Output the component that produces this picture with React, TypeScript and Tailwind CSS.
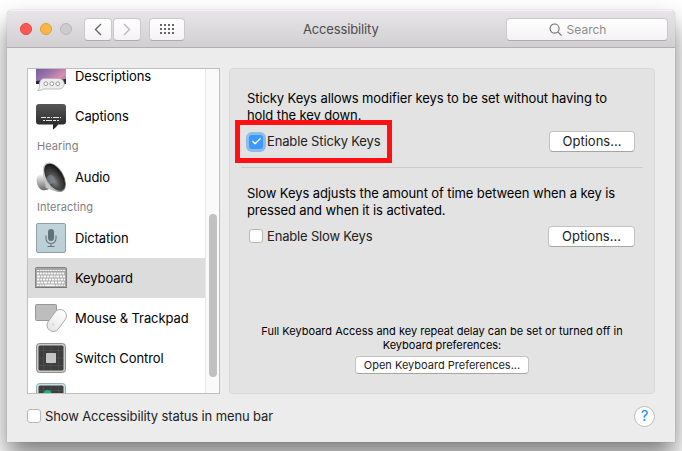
import type { ReactNode } from "react";
import { Check } from "lucide-react";

function DescriptionsIcon() {
  return (
    <svg width="32" height="32" viewBox="0 0 32 32">
      <defs>
        <linearGradient id="sunset" x1="0" y1="0" x2="1" y2="1">
          <stop offset="0" stopColor="#5f5494" />
          <stop offset=".45" stopColor="#9c70ad" />
          <stop offset=".75" stopColor="#d98fae" />
          <stop offset="1" stopColor="#8b6aa8" />
        </linearGradient>
      </defs>
      <rect x="1" y="2" width="30" height="22" fill="url(#sunset)" />
      <path d="M1 21l8-1 6 1 16-2v5H1z" fill="#2c2540" />
      <path d="M9 18.500h15a5.200 5.200 0 0 1 0 10.500H9c-1.500 1-3.500 1.500-6.500 1.500 1.500-1 2-2.500 2-6.500A5.200 5.200 0 0 1 9 18.500z" fill="#ededed" stroke="#b0b0b0" strokeWidth=".8" />
      <g fill="#fff" stroke="#8c8c8c" strokeWidth=".9"><circle cx="10.800" cy="23.700" r="1.900" /><circle cx="16.800" cy="23.700" r="1.900" /><circle cx="22.800" cy="23.700" r="1.900" /></g>
    </svg>
  );
}

function CaptionsIcon() {
  return (
    <svg width="32" height="32" viewBox="0 0 32 32">
      <defs><linearGradient id="cap" x1="0" y1="0" x2="0" y2="1"><stop offset="0" stopColor="#575757" /><stop offset="1" stopColor="#222" /></linearGradient></defs>
      <path d="M4 4h24a3 3 0 0 1 3 3v14.500a3 3 0 0 1-3 3h-5c-1 1.500-2.500 3.500-5 5v-5H4a3 3 0 0 1-3-3V7a3 3 0 0 1 3-3z" fill="url(#cap)" />
      <path d="M6 17.500h20" stroke="#e3e3e3" strokeWidth="1" strokeDasharray="5 1 3 1 1 1 6 1" />
      <path d="M8 20.500h16" stroke="#e3e3e3" strokeWidth="1" strokeDasharray="2 1 6 1 3 1" />
    </svg>
  );
}

function AudioIcon() {
  return (
    <svg width="32" height="32" viewBox="0 0 32 32">
      <defs>
        <linearGradient id="metal" x1="0" y1="0" x2="1" y2="1"><stop offset="0" stopColor="#dedede" /><stop offset=".6" stopColor="#a8a8a8" /><stop offset="1" stopColor="#444" /></linearGradient>
        <linearGradient id="magnet" x1="0" y1="0" x2="0" y2="1"><stop offset="0" stopColor="#fafafa" /><stop offset="1" stopColor="#6a6a6a" /></linearGradient>
        <radialGradient id="cone" cx=".35" cy=".6" r=".65"><stop offset="0" stopColor="#8a8a8a" /><stop offset=".4" stopColor="#505050" /><stop offset="1" stopColor="#151515" /></radialGradient>
      </defs>
      <path d="M2 16c1-2 3-3 6-3l7 14c-2 2-5 2.500-8 2-4-1-6.500-9-5-13z" fill="url(#magnet)" />
      <path d="M8 14c0-4 0-9 3-12l14 29c-5 0-10-3-14-4z" fill="#c4c4c4" />
      <ellipse cx="19.300" cy="16.300" rx="9.300" ry="16.300" transform="rotate(-31 19.300 16.300)" fill="url(#metal)" />
      <ellipse cx="19.600" cy="16.200" rx="8.200" ry="15" transform="rotate(-31 19.600 16.200)" fill="url(#cone)" />
      <ellipse cx="15.500" cy="18.500" rx="3.800" ry="4.600" fill="#808890" opacity=".65" />
    </svg>
  );
}

function DictationIcon() {
  return (
    <svg width="32" height="32" viewBox="0 0 32 32">
      <defs><linearGradient id="dict" x1="0" y1="0" x2="0" y2="1"><stop offset="0" stopColor="#c2d3da" /><stop offset="1" stopColor="#b9ced6" /></linearGradient></defs>
      <rect x="1.500" y="1.500" width="29" height="29" rx="1.500" fill="url(#dict)" stroke="#929fa5" />
      <rect x="13" y="7" width="6" height="12" rx="3" fill="#62727a" />
      <path d="M11 13.500v3a5 5 0 0 0 10 0v-3M16 21.500v3M12.500 24.500h7" fill="none" stroke="#66767e" strokeWidth="1.100" />
    </svg>
  );
}

function KeyboardIcon() {
  return (
    <svg width="32" height="32" viewBox="0 0 32 32">
      <rect x=".5" y="5.500" width="31" height="20" rx="1" fill="#a6a6a6" stroke="#858585" />
      <path d="M0 25.500h32" stroke="#777" />
      <g stroke="#fafafa" strokeWidth="2">
        <path d="M2 8.500h28" strokeDasharray="2 .6" strokeWidth="1.200" />
        <path d="M2 11.500h28" strokeDasharray="2.100 .7" />
        <path d="M2 14.500h28" strokeDasharray="3 .7 2 .7" />
        <path d="M2 17.500h28" strokeDasharray="2.500 .7 2 .7" />
        <path d="M2 20.500h28" strokeDasharray="3.500 .7 2 .7" />
        <path d="M2 23.200h28" strokeDasharray="2 .7 2 .7 2 .7 10 .7 2 .7 2 .7 2 .7" strokeWidth="1.600" />
      </g>
    </svg>
  );
}

function MouseIcon() {
  return (
    <svg width="32" height="32" viewBox="0 0 32 32">
      <defs><linearGradient id="mouse" x1="0" y1="0" x2="0" y2="1"><stop offset="0" stopColor="#fff" /><stop offset="1" stopColor="#e6e6e6" /></linearGradient></defs>
      <rect x=".5" y="2.500" width="21" height="16" rx="1" fill="#bdbdbd" stroke="#989898" />
      <rect x="15.500" y="6.500" width="12.500" height="24" rx="6" transform="rotate(36 21.750 18.500)" fill="url(#mouse)" stroke="#a5a5a5" strokeWidth=".9" />
      <circle cx="18" cy="22.500" r="1" fill="#ccc" />
    </svg>
  );
}

function SwitchIcon({ green = false }: { green?: boolean }) {
  return (
    <svg width="32" height="32" viewBox="0 0 32 32">
      <rect x="1.500" y="1.500" width="29" height="29" rx="3" fill={green ? "#c9e0e8" : "#cbcbcb"} stroke={green ? "#99adb5" : "#8c8c8c"} />
      <rect x="3.500" y="3.500" width="25" height="25" rx="1.500" fill="#3e3e3e" />
      <path d="M8.500 4v24M23.500 4v24M4 8.500h24M4 23.500h24M16 4v24M4 16h24" stroke="#565656" strokeWidth=".6" />
      {green ? <circle cx="12.500" cy="12" r="4" fill="#10b978" /> : <rect x="11" y="11" width="10" height="10" rx=".7" fill="#c6c6c6" />}
    </svg>
  );
}

function Row({ icon, label, active = false }: { icon: ReactNode; label: string; active?: boolean }) {
  return (
    <div className={`flex h-10 shrink-0 items-center gap-2 pl-[7px] ${active ? "bg-[#dcdcdc]" : ""}`}>
      {icon}
      <span className="pt-0.5 tracking-[-0.1px]">{label}</span>
    </div>
  );
}

function Heading({ children }: { children: ReactNode }) {
  return <div className="h-[21px] shrink-0 pl-[9px] text-[11px] leading-[21px] tracking-[0.05px] text-[#808080]">{children}</div>;
}

function Box() {
  return <span className="size-[14px] shrink-0 rounded-[3px] border border-[#b9b9b9] bg-white" />;
}

const button = "flex items-center justify-center rounded-[4px] border border-[#c3c3c3] border-b-[#a5a5a5] bg-white whitespace-nowrap text-[#222]";
const toolButton = "flex h-[23px] items-center justify-center rounded-[4px] border border-[#cbc9cb] border-b-[#aeacae] bg-linear-to-b from-white to-[#f3f3f3]";

export default function App() {
  return (
    <div className="h-[451px] w-[682px] overflow-hidden bg-white px-[7px] pt-[10px] font-['Inter',sans-serif] text-[13px] whitespace-nowrap text-black">
      <main className="flex h-[432px] w-[668px] flex-col overflow-hidden rounded-t-[5px] bg-[#ececec] shadow-[0_0_1px_rgba(0,0,0,0.4),0_15px_26px_rgba(0,0,0,0.5)]">
        <header className="flex h-[38px] shrink-0 items-center border-t border-b border-t-[#f4f3f4] border-b-[#b1afb1] bg-linear-to-b from-[#e7e5e7] to-[#d1cfd1] pl-[13px] pr-[7px]">
          <div className="flex w-[64px] gap-2">
            <i className="size-3 rounded-full border border-[#e2463f] bg-[#fc5753]" />
            <i className="size-3 rounded-full border border-[#de9f34] bg-[#fdb645]" />
            <i className="size-3 rounded-full border border-[#b9b7b9] bg-[#cdcbcd]" />
          </div>
          <div className="flex gap-px">
            <button className={`${toolButton} w-[28px]`}><svg width="8" height="13" viewBox="0 0 8 13"><path d="M7 1L1.500 6.500 7 12" fill="none" stroke="#666" strokeWidth="1.400" /></svg></button>
            <button className={`${toolButton} w-[28px]`}><svg width="8" height="13" viewBox="0 0 8 13"><path d="M1 1l5.500 5.500L1 12" fill="none" stroke="#bbb" strokeWidth="1.400" /></svg></button>
          </div>
          <button className={`${toolButton} ml-[8px] w-[36px]`}>
            <svg width="14" height="10" viewBox="0 0 14 10"><path d="M0 1h14M0 5h14M0 9h14" stroke="#666" strokeWidth="2" strokeDasharray="2 2" /></svg>
          </button>
          <h1 className="ml-[118px] pt-0.5 text-[13px] tracking-[-0.15px] text-[#4c4c4c]">Accessibility</h1>
          <div className={`${toolButton} ml-auto w-[162px] gap-[5px] pr-[19px] text-[#8e8e8e]`}>
            <svg width="13" height="13" viewBox="0 0 14 14" fill="none" stroke="#707070" strokeWidth="1.200"><circle cx="6" cy="6" r="4.900" /><path d="M9.500 9.500l4 4" /></svg>
            <span className="pt-0.5 text-[12px]">Search</span>
          </div>
        </header>
        <div className="flex gap-[9px] pt-5 pl-5">
          <aside className="flex h-[326px] w-[193px] overflow-hidden border border-[#bfbfbf] bg-white">
            <div className="flex w-[177px] flex-col">
              <div className="-mt-[13px] flex flex-col">
                <Row icon={<DescriptionsIcon />} label="Descriptions" />
                <Row icon={<CaptionsIcon />} label="Captions" />
                <Heading>Hearing</Heading>
                <Row icon={<AudioIcon />} label="Audio" />
                <Heading>Interacting</Heading>
                <Row icon={<DictationIcon />} label="Dictation" />
                <Row icon={<KeyboardIcon />} label="Keyboard" active />
                <Row icon={<MouseIcon />} label="Mouse & Trackpad" />
                <Row icon={<SwitchIcon />} label="Switch Control" />
                <Row icon={<SwitchIcon green />} label="" />
              </div>
            </div>
            <div className="flex flex-1 justify-center border-l border-[#e7e7e7] bg-[#fafafa] pt-[145px]">
              <div className="h-[163px] w-2 rounded-full bg-[#c1c1c1]" />
            </div>
          </aside>
          <section className="flex h-[326px] w-[426px] flex-col rounded-[4px] border border-[#d9d9d9] bg-[#e3e3e3] pt-[21px]">
            <p className="pl-[17px] leading-[17px] tracking-[-0.1px]">Sticky Keys allows modifier keys to be set without having to<br />hold the key down.</p>
            <div className="-mt-1 flex h-[43px] items-center justify-between pr-[19px] pl-[5px]">
              <div className="relative flex h-[43px] w-[157px] items-center gap-1 border-[5px] border-[#ff1014] pl-[9px] text-[#222]">
                <span className="flex size-[14px] shrink-0 items-center justify-center rounded-[3px] bg-[#3b99fc] ring-[3px] ring-[#8dbce9]"><Check size={11} strokeWidth={3} color="white" /></span>
                <span className="tracking-[-0.15px]">Enable Sticky Keys</span>
              </div>
              <button className={`${button} h-[21px] w-[86px]`}>Options...</button>
            </div>
            <hr className="mx-[11px] mt-1 border-[#cbcbcb]" />
            <p className="mt-[17px] pl-[17px] leading-[17px] tracking-[-0.1px]">Slow Keys adjusts the amount of time between when a key is<br />pressed and when it is activated.</p>
            <div className="mt-[7px] flex h-[21px] items-center gap-1 pr-[19px] pl-[19px] text-[#222]">
              <div className="flex pb-px"><Box /></div>
              <span className="pt-px tracking-[-0.18px]">Enable Slow Keys</span>
              <button className={`${button} ml-auto h-[21px] w-[87px]`}>Options...</button>
            </div>
            <p className="mt-[77px] text-center text-[11px] leading-[14px]">Full Keyboard Access and key repeat delay can be set or turned off in<br />Keyboard preferences:</p>
            <button className={`${button} mt-1 h-[18px] w-[174px] self-center text-[11px]`}>Open Keyboard Preferences...</button>
          </section>
        </div>
        <footer className="mt-[11px] flex h-[22px] items-center gap-1 pr-5 pl-5 text-[#222]">
          <Box />
          <span className="pt-0.5 tracking-[-0.13px]">Show Accessibility status in menu bar</span>
          <button className="ml-auto flex size-[21px] items-center justify-center rounded-full border border-[#bcbcbc] bg-white text-[15px] text-[#1d8bf8]">?</button>
        </footer>
      </main>
    </div>
  );
}
